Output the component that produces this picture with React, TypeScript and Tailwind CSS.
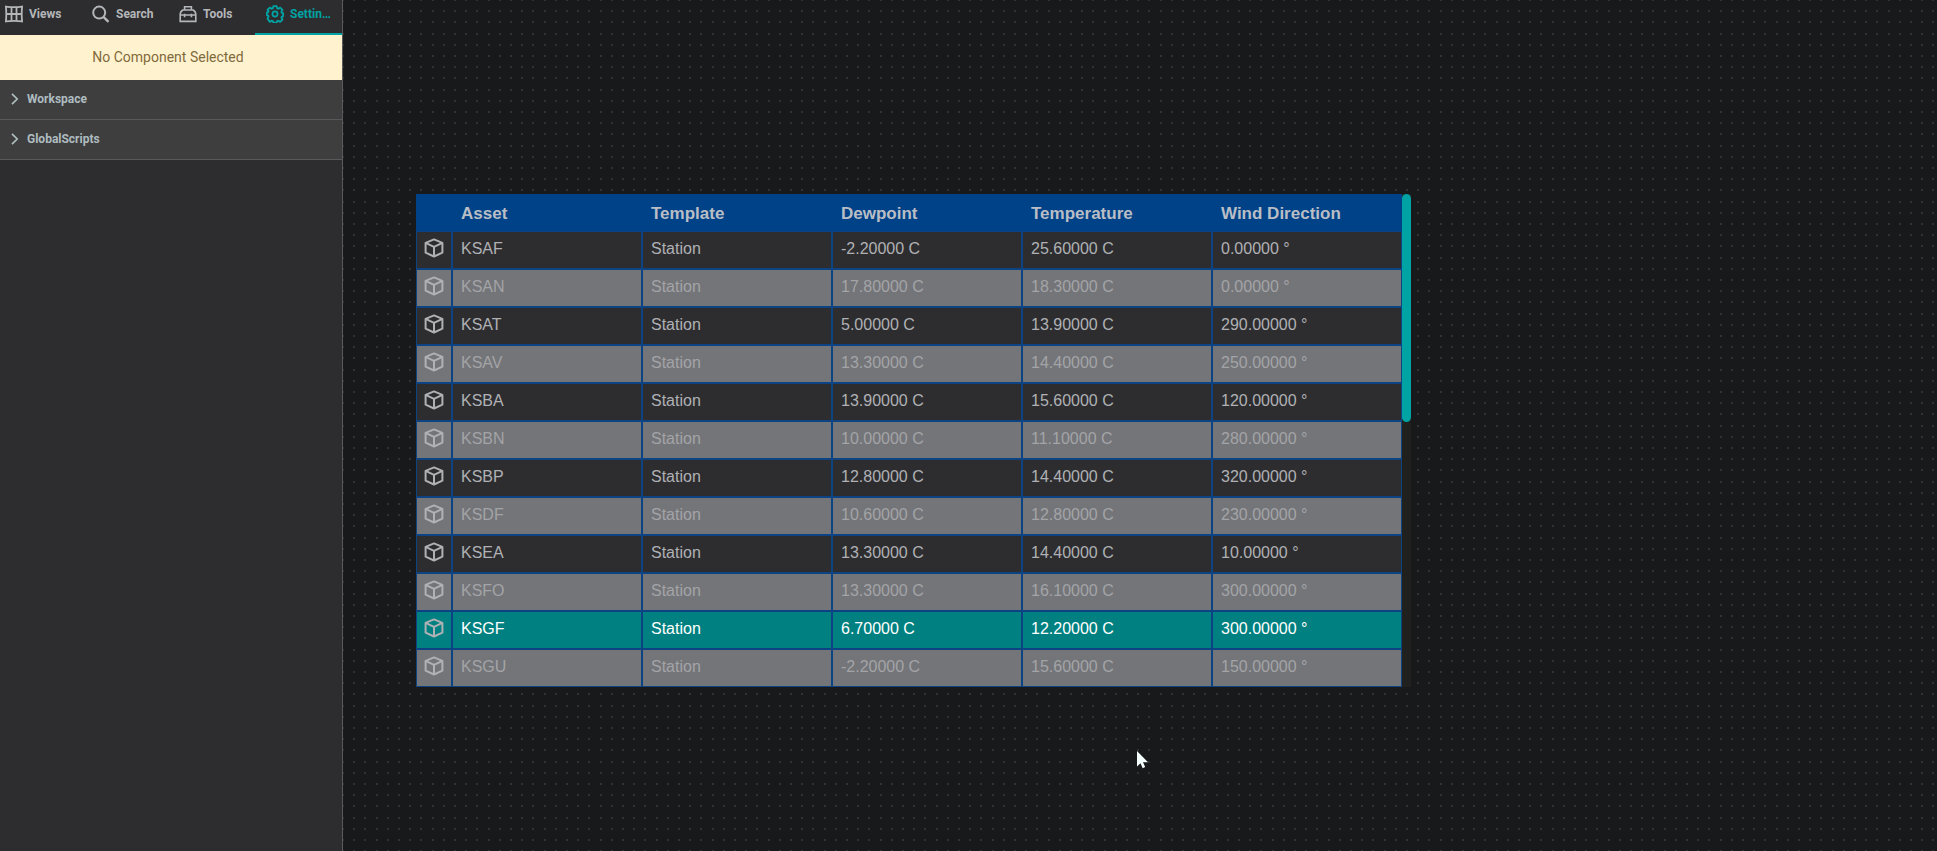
import type { ReactNode } from "react";

import clsx from "clsx";

type Station = {
  asset: string;
  dewpoint: string;
  temperature: string;
  windDirection: string;
  selected?: boolean;
};

const STATIONS: Station[] = [
  { asset: "KSAF", dewpoint: "-2.20000 C", temperature: "25.60000 C", windDirection: "0.00000 °" },
  { asset: "KSAN", dewpoint: "17.80000 C", temperature: "18.30000 C", windDirection: "0.00000 °" },
  { asset: "KSAT", dewpoint: "5.00000 C", temperature: "13.90000 C", windDirection: "290.00000 °" },
  { asset: "KSAV", dewpoint: "13.30000 C", temperature: "14.40000 C", windDirection: "250.00000 °" },
  { asset: "KSBA", dewpoint: "13.90000 C", temperature: "15.60000 C", windDirection: "120.00000 °" },
  { asset: "KSBN", dewpoint: "10.00000 C", temperature: "11.10000 C", windDirection: "280.00000 °" },
  { asset: "KSBP", dewpoint: "12.80000 C", temperature: "14.40000 C", windDirection: "320.00000 °" },
  { asset: "KSDF", dewpoint: "10.60000 C", temperature: "12.80000 C", windDirection: "230.00000 °" },
  { asset: "KSEA", dewpoint: "13.30000 C", temperature: "14.40000 C", windDirection: "10.00000 °" },
  { asset: "KSFO", dewpoint: "13.30000 C", temperature: "16.10000 C", windDirection: "300.00000 °" },
  { asset: "KSGF", dewpoint: "6.70000 C", temperature: "12.20000 C", windDirection: "300.00000 °", selected: true },
  { asset: "KSGU", dewpoint: "-2.20000 C", temperature: "15.60000 C", windDirection: "150.00000 °" },
];

const COLUMNS = ["Asset", "Template", "Dewpoint", "Temperature", "Wind Direction"];

const SECTIONS = ["Workspace", "GlobalScripts"];

const TABS: { label: string; icon: ReactNode; active?: boolean }[] = [
  { label: "Views", icon: <ViewsIcon /> },
  { label: "Search", icon: <SearchIcon /> },
  { label: "Tools", icon: <ToolsIcon /> },
  { label: "Settin…", icon: <SettingsIcon />, active: true },
];

function ViewsIcon() {
  return (
    <svg width="18" height="18" viewBox="0 0 18 18" fill="none" stroke="currentColor" strokeWidth="1.8" className="shrink-0" aria-hidden>
      <path d="M.9 1.6Q9 2.8 17.1 1.6Q16.3 9 17.1 16.4Q9 15.2 .9 16.4Q1.7 9 .9 1.6Z" />
      <path d="M6.5 2.4v13.2M11.5 2.4v13.2M1.4 9h15.2" />
    </svg>
  );
}

function SearchIcon() {
  return (
    <svg width="18" height="18" viewBox="0 0 18 18" fill="none" stroke="currentColor" strokeWidth="2" className="shrink-0" aria-hidden>
      <circle cx="7.2" cy="7.6" r="6" />
      <path d="m11.5 11.9 5 4.9" strokeWidth="2.4" />
    </svg>
  );
}

function ToolsIcon() {
  return (
    <svg width="18" height="18" viewBox="0 0 18 18" fill="none" stroke="currentColor" strokeWidth="1.6" className="shrink-0" aria-hidden>
      <path d="M5.6 5V1.8h6.8V5" />
      <path d="M4 5h10q2.600 1.200 2.800 4.200v7.200H1.200V9.200Q1.400 6.200 4 5z" />
      <path d="M1.200 10h15.600M5.600 8.800v3.400M12.400 8.800v3.400" />
    </svg>
  );
}

function SettingsIcon() {
  return (
    <svg width="18" height="18" viewBox="0 0 24 24" fill="none" stroke="currentColor" strokeWidth="2.4" strokeLinejoin="round" className="shrink-0" aria-hidden>
      <path d="M9.800 1.600h4.400l.7 2.800 1.500.6 2.500-1.500 3.100 3.100-1.500 2.500.6 1.500 1.700.2v4.400l-1.700.2-.6 1.500 1.500 2.500-3.100 3.100-2.500-1.500-1.500.6-.7 1.800H9.800l-.7-1.800-1.500-.6-2.500 1.500L2 17.900l1.500-2.500-.6-1.500-1.700-.2V9.800l1.700-.2.6-1.500L2 6.600l3.100-3.100L7.600 5l1.500-.6z" />
      <circle cx="12" cy="12" r="3.4" />
    </svg>
  );
}

function CubeIcon() {
  return (
    <svg width="20" height="20" viewBox="0 0 20 20" fill="none" stroke="currentColor" strokeWidth="2" strokeLinejoin="round" className="mx-auto block text-[#b0b1b4]" aria-hidden>
      <path d="M10 1.4 18.4 4.9v9.8L10 18.5 1.6 14.7V4.9z" />
      <path d="M1.6 4.9 10 8.8l8.4-3.9M10 8.8v9.7" />
    </svg>
  );
}

function ChevronIcon() {
  return (
    <svg width="8" height="12" viewBox="0 0 8 12" fill="none" stroke="currentColor" strokeWidth="1.7" className="shrink-0" aria-hidden>
      <path d="m1 .8 5.2 5.2L1 11.2" />
    </svg>
  );
}

function Sidebar() {
  return (
    <aside className="w-[343px] shrink-0 border-r border-[#5a5a5c] bg-[#2d2d30] font-[Roboto,sans-serif]">
      <div role="tablist" className="flex h-[35px] justify-end overflow-hidden">
        {TABS.map((tab) => (
          <button
            key={tab.label}
            type="button"
            role="tab"
            aria-selected={Boolean(tab.active)}
            className={clsx(
              "flex w-[87px] shrink-0 items-center gap-[6px] border-b-2 pb-[6px] pl-[11px] text-xs font-bold whitespace-nowrap",
              tab.active ? "border-[#00a3a3] text-[#00a3a3]" : "border-transparent text-[#b4b6b9]",
            )}
          >
            {tab.icon}
            {tab.label}
          </button>
        ))}
      </div>
      <p className="flex h-[45px] items-center justify-center bg-[#fff2cf] pr-[6px] pb-[2px] text-sm text-[#7f6a3c]">
        No Component Selected
      </p>
      {SECTIONS.map((section) => (
        <button
          key={section}
          type="button"
          aria-expanded={false}
          className="flex h-10 w-full items-center gap-2 border-b border-[#58585a] bg-[#3e3e3e] pb-[2px] pl-[11px] text-left text-xs font-bold text-[#aebcc0]"
        >
          <ChevronIcon />
          {section}
        </button>
      ))}
    </aside>
  );
}

function StationTable() {
  return (
    <table className="w-[986px] table-fixed border-separate border-spacing-0">
      <colgroup>
        <col className="w-9" />
      </colgroup>
      <thead>
        <tr className="h-[37px] bg-[#004287] text-left text-[17px] leading-5 text-[#b9bec6]">
          <th aria-label="Type" />
          {COLUMNS.map((column) => (
            <th key={column} scope="col" className="px-[9px] pt-[2px] pb-0 font-bold">
              {column}
            </th>
          ))}
        </tr>
      </thead>
      <tbody>
        {STATIONS.map((station, index) => {
          const cells = [station.asset, "Station", station.dewpoint, station.temperature, station.windDirection];

          return (
            <tr
              key={station.asset}
              aria-selected={Boolean(station.selected)}
              className={clsx(
                "h-[38px] text-base leading-5",
                station.selected && "bg-[#008080] text-white",
                !station.selected && index % 2 === 0 && "bg-[#2d2d30] text-[#b0b1b4]",
                !station.selected && index % 2 === 1 && "bg-[#747579] text-[#a3a4a7]",
              )}
            >
              <td className="border border-[#0b4383] p-0 pb-1">
                <CubeIcon />
              </td>
              {cells.map((cell, cellIndex) => (
                <td key={COLUMNS[cellIndex]} className="border border-[#0b4383] px-2 pt-0 pb-[2px]">
                  {cell}
                </td>
              ))}
            </tr>
          );
        })}
      </tbody>
    </table>
  );
}

function DotGrid() {
  return (
    <svg className="absolute inset-0 h-full w-full" aria-hidden>
      <defs>
        <pattern id="dots" x="-1" y="-1" width="56" height="56" patternUnits="userSpaceOnUse">
          {[0, 11, 22, 34, 45].map((y) =>
            [0, 11, 22, 34, 45].map((x) => (
              <rect key={`${x}-${y}`} x={x} y={y} width="2" height="2" fill="#303133" />
            )),
          )}
        </pattern>
      </defs>
      <rect width="100%" height="100%" fill="url(#dots)" />
    </svg>
  );
}

function Canvas() {
  return (
    <main className="relative min-w-0 flex-1 overflow-hidden bg-[#18191b]">
      <DotGrid />
      <div className="absolute top-[194px] left-[73px] flex font-['Liberation_Sans',Arial,sans-serif]">
        <StationTable />
        <div className="w-[9px] bg-[#20211f]">
          <div className="h-[228px] rounded-full bg-[#00a3a3]" />
        </div>
      </div>
      <svg width="12" height="18" viewBox="0 0 12 18" className="absolute top-[751px] left-[794px]" aria-hidden>
        <path d="M0 0v15.5l3.5-3.3 2.2 5 2.5-1.1L6 11.300h5z" fill="#f4fffb" />
      </svg>
    </main>
  );
}

export default function App() {
  return (
    <div className="flex min-h-screen">
      <Sidebar />
      <Canvas />
    </div>
  );
}
